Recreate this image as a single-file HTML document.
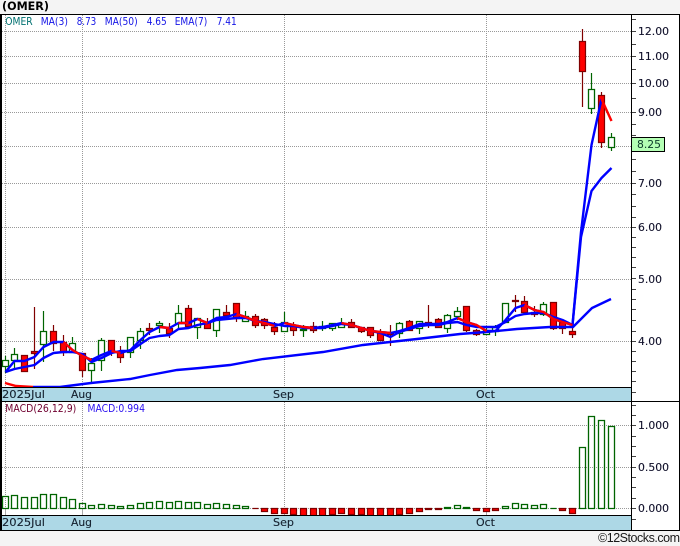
<!DOCTYPE html>
<html><head><meta charset="utf-8"><style>
html,body{margin:0;padding:0;background:#f4f4f4;width:680px;height:546px;overflow:hidden}
svg{display:block;position:absolute;left:0;top:0}
text{font-family:"DejaVu Sans","Liberation Sans",sans-serif}
</style></head><body>
<svg width="680" height="546" viewBox="0 0 680 546" xmlns="http://www.w3.org/2000/svg">
<rect x="0" y="0" width="680" height="546" fill="#f4f4f4"/>
<rect x="0" y="14" width="680" height="516" fill="#fff"/>
<text x="2" y="10" font-size="11.5" font-weight="bold" fill="#000" textLength="47" lengthAdjust="spacingAndGlyphs">(OMER)</text>

<!-- grid -->
<path d="M2 31.5H631M2 56.5H631M2 83.5H631M2 112.5H631M2 146.5H631M2 183.5H631M2 227.5H631M2 279.5H631M2 341.5H631M2 425.5H631M2 467.5H631M2 508.5H631M5.5 15V388M82.5 15V388M284.5 15V388M486.5 15V388M5.5 402V516M82.5 402V516M284.5 402V516M486.5 402V516" stroke="#999" stroke-width="1" stroke-dasharray="1 1" fill="none"/>
<path d="M5.5 509V516M82.5 509V516M284.5 509V516M486.5 509V516" stroke="#aaa" stroke-width="1" fill="none"/>

<!-- wicks -->
<path fill="none" stroke="#006400" stroke-width="1.2" d="M5.5 356V373M14.5 348V370M43.5 311V362M72.5 337V352M91.5 358V383M101.5 338V371M130.5 337V358M140.5 328V349M159.5 321V333M178.5 305V329M197.5 318V339M216.5 309V337M245.5 311V322M284.5 312V331M303.5 325V337M322.5 321V331M332.5 323V331M341.5 318V328M399.5 322V338M419.5 321V334M447.5 314V333M457.5 307V320M486.5 326V334M495.5 325V336M505.5 303V323M543.5 302V316M591.5 73V114M611.5 133V151"/>
<path fill="none" stroke="#800000" stroke-width="1.2" d="M24.5 355V371M34.5 307V369M53.5 325V351M63.5 335V356M82.5 353V377M111.5 340V356M120.5 346V363M149.5 323V335M169.5 323V338M188.5 305V327M207.5 318V329M226.5 305V318M236.5 303V322M255.5 314V328M264.5 318V329M274.5 322V335M293.5 322V336M313.5 322V333M351.5 319V328M361.5 327V333M370.5 327V338M380.5 329V340M390.5 325V346M409.5 320V330M428.5 305V328M438.5 318V328M466.5 306V332M476.5 329V336M515.5 295V312M524.5 296V314M534.5 306V317M553.5 302V330M562.5 322V334M572.5 327V338M582.5 29V107M601.5 92V148"/>
<!-- bodies -->
<path fill="#fff" stroke="#006400" stroke-width="1.3" d="M2.5 360.5h6v6h-6zM11.5 354.5h6v6h-6zM40.5 331.5h6v13h-6zM69.5 343.5h6v9h-6zM88.5 363.5h6v7h-6zM98.5 340.5h6v20h-6zM127.5 337.5h6v15h-6zM137.5 331.5h6v9h-6zM156.5 323.5h6v2h-6zM175.5 313.5h6v10h-6zM194.5 318.5h6v9h-6zM213.5 309.5h6v21h-6zM242.5 316.5h6v5h-6zM281.5 322.5h6v9h-6zM300.5 329.5h6v1h-6zM319.5 326.5h6v2h-6zM329.5 323.5h6v5h-6zM338.5 323.5h6v4h-6zM396.5 323.5h6v10h-6zM416.5 321.5h6v7h-6zM444.5 315.5h6v13h-6zM454.5 311.5h6v5h-6zM483.5 330.5h6v4h-6zM492.5 327.5h6v4h-6zM502.5 303.5h6v19h-6zM540.5 304.5h6v10h-6zM588.5 89.5h6v19h-6zM608.5 137.5h6v10h-6z"/>
<path fill="#f00" stroke="#800000" stroke-width="1.2" d="M21.5 355.5h6v16h-6zM31.5 351.5h6v2h-6zM50.5 331.5h6v12h-6zM60.5 342.5h6v10h-6zM79.5 353.5h6v17h-6zM108.5 340.5h6v12h-6zM117.5 351.5h6v6h-6zM146.5 328.5h6v2h-6zM166.5 328.5h6v5h-6zM185.5 308.5h6v18h-6zM204.5 322.5h6v6h-6zM223.5 312.5h6v3h-6zM233.5 303.5h6v15h-6zM252.5 316.5h6v9h-6zM261.5 319.5h6v6h-6zM271.5 327.5h6v4h-6zM290.5 325.5h6v5h-6zM310.5 326.5h6v4h-6zM348.5 322.5h6v5h-6zM358.5 327.5h6v4h-6zM367.5 327.5h6v8h-6zM377.5 332.5h6v8h-6zM387.5 333.5h6v1h-6zM406.5 321.5h6v9h-6zM425.5 322.5h6v2h-6zM435.5 319.5h6v8h-6zM463.5 306.5h6v24h-6zM473.5 330.5h6v4h-6zM512.5 300.5h6v1h-6zM521.5 301.5h6v11h-6zM531.5 312.5h6v2h-6zM550.5 302.5h6v26h-6zM559.5 322.5h6v6h-6zM569.5 331.5h6v3h-6zM579.5 41.5h6v30h-6zM598.5 95.5h6v47h-6z"/>

<!-- MA50 -->
<polyline fill="none" stroke="#0000ff" stroke-width="2.4" points="33,387 60,387 91,383 130,379 150,375 177,370 200,368 230,365 263,359 323,352 363,345 390,342 417,339 460,334 486,332 517,329 550,327 573,327 592,308 611,299"/>
<polyline fill="none" stroke="#f00" stroke-width="2.4" points="5,383 16,386 33,387"/>
<!-- EMA7 -->
<polyline fill="none" stroke="#0000ff" stroke-width="2.4" stroke-linejoin="round" points="5.5,372 14.5,369 24.5,367 34.5,365 43.5,358 53.5,353 63.5,352 72.5,352 82.5,354 91.5,362 101.5,358 111.5,353 120.5,351 130.5,351 140.5,344 149.5,338 159.5,336 169.5,335 178.5,329 188.5,328 197.5,325 207.5,323 216.5,320 226.5,319 236.5,318 245.5,318 255.5,321 264.5,322 274.5,324 284.5,326 293.5,326 303.5,328 313.5,328 322.5,328 332.5,326 341.5,324 351.5,325 361.5,328 370.5,331 380.5,333 390.5,337 399.5,332 409.5,329 419.5,326 428.5,325 438.5,325 447.5,323 457.5,322 466.5,325 476.5,327 486.5,327 495.5,327 505.5,322 515.5,316 524.5,314 534.5,313 543.5,313 553.5,317 562.5,320 572.5,325 581,237 591.5,191 601.5,178 611.5,168"/>
<!-- MA3 -->
<polyline fill="none" stroke="#0000ff" stroke-width="2.4" stroke-linejoin="round" points="5.5,372 14.5,361 24.5,361 34.5,357 43.5,347 53.5,342 63.5,342 72.5,350 82.5,356 91.5,360 101.5,355 111.5,351 120.5,353 130.5,350 140.5,340 149.5,332 159.5,327 169.5,328 178.5,323 188.5,323 197.5,319 207.5,323 216.5,318 226.5,317 236.5,314 245.5,317 255.5,321 264.5,323 274.5,326 284.5,323 293.5,325 303.5,327 313.5,328 322.5,327 332.5,325 341.5,323 351.5,325 361.5,328 370.5,331 380.5,332 390.5,333 399.5,331 409.5,328 419.5,324 428.5,324 438.5,324 447.5,322 457.5,318 466.5,322 476.5,325 486.5,331 495.5,331 505.5,320 515.5,308 524.5,305 534.5,310 543.5,312 553.5,319 562.5,322 572.5,325 581,232 591.5,145 601.5,99"/>
<g fill="none" stroke="#f00" stroke-width="2.4" stroke-linejoin="round">
<polyline points="63.5,342 72.5,350 82.5,356 91.5,360"/>
<polyline points="111.5,351 120.5,353"/>
<polyline points="159.5,327 169.5,328"/>
<polyline points="178.5,323 188.5,323"/>
<polyline points="197.5,319 207.5,323"/>
<polyline points="236.5,314 245.5,317 255.5,321 264.5,323 274.5,326"/>
<polyline points="284.5,323 293.5,325 303.5,327 313.5,328"/>
<polyline points="341.5,323 351.5,325 361.5,328 370.5,331 380.5,332 390.5,333"/>
<polyline points="457.5,318 466.5,322 476.5,325 486.5,331"/>
<polyline points="524.5,305 534.5,310 543.5,312 553.5,319 562.5,322 572.5,325"/>
<polyline points="601.5,99 611.5,121"/>
</g>

<!-- MACD histogram -->
<path fill="none" stroke="#006400" stroke-width="1.3" d="M2.5 496.5h6V508.5h-6zM11.5 495.5h6V508.5h-6zM21.5 497.5h6V508.5h-6zM31.5 497.5h6V508.5h-6zM40.5 494.5h6V508.5h-6zM50.5 494.5h6V508.5h-6zM60.5 497.5h6V508.5h-6zM69.5 499.5h6V508.5h-6zM79.5 503.5h6V508.5h-6zM88.5 505.5h6V508.5h-6zM98.5 504.5h6V508.5h-6zM108.5 505.5h6V508.5h-6zM117.5 506.5h6V508.5h-6zM127.5 505.5h6V508.5h-6zM137.5 503.5h6V508.5h-6zM146.5 502.5h6V508.5h-6zM156.5 501.5h6V508.5h-6zM166.5 502.5h6V508.5h-6zM175.5 501.5h6V508.5h-6zM185.5 502.5h6V508.5h-6zM194.5 502.5h6V508.5h-6zM204.5 504.5h6V508.5h-6zM213.5 503.5h6V508.5h-6zM223.5 504.5h6V508.5h-6zM233.5 505.5h6V508.5h-6zM242.5 506.5h6V508.5h-6zM444.5 507.5h6V508.5h-6zM454.5 505.5h6V508.5h-6zM463.5 507.5h6V508.5h-6zM502.5 506.5h6V508.5h-6zM512.5 503.5h6V508.5h-6zM521.5 504.5h6V508.5h-6zM531.5 505.5h6V508.5h-6zM540.5 504.5h6V508.5h-6zM550.5 508.5h6M579.5 447.5h6V508.5h-6zM588.5 416.5h6V508.5h-6zM598.5 420.5h6V508.5h-6zM608.5 426.5h6V508.5h-6z"/>
<path fill="#f00" stroke="#800000" stroke-width="1.2" d="M252.5 508.5h6M261.5 508.5h6v3h-6zM271.5 508.5h6v5h-6zM281.5 508.5h6v5h-6zM290.5 508.5h6v6h-6zM300.5 508.5h6v7h-6zM310.5 508.5h6v7h-6zM319.5 508.5h6v7h-6zM329.5 508.5h6v6h-6zM338.5 508.5h6v5h-6zM348.5 508.5h6v6h-6zM358.5 508.5h6v6h-6zM367.5 508.5h6v7h-6zM377.5 508.5h6v7h-6zM387.5 508.5h6v7h-6zM396.5 508.5h6v6h-6zM406.5 508.5h6v5h-6zM416.5 508.5h6v3h-6zM425.5 508.5h6v1h-6zM435.5 508.5h6v1h-6zM473.5 508.5h6v2h-6zM483.5 508.5h6v3h-6zM492.5 508.5h6v2h-6zM559.5 508.5h6v2h-6zM569.5 508.5h6v5h-6z"/>

<!-- bands -->
<rect x="1" y="388" width="630" height="13" fill="#add8e6"/>
<rect x="1" y="516" width="630" height="14" fill="#add8e6"/>
<g font-size="11" fill="#14202e" stroke="#14202e" stroke-width="0.12">
<text x="2" y="398" textLength="43" lengthAdjust="spacingAndGlyphs">2025Jul</text>
<text x="71" y="398" textLength="21" lengthAdjust="spacingAndGlyphs">Aug</text>
<text x="273" y="398" textLength="21" lengthAdjust="spacingAndGlyphs">Sep</text>
<text x="476" y="398" textLength="19" lengthAdjust="spacingAndGlyphs">Oct</text>
<text x="2" y="526" textLength="43" lengthAdjust="spacingAndGlyphs">2025Jul</text>
<text x="71" y="526" textLength="21" lengthAdjust="spacingAndGlyphs">Aug</text>
<text x="273" y="526" textLength="21" lengthAdjust="spacingAndGlyphs">Sep</text>
<text x="476" y="526" textLength="19" lengthAdjust="spacingAndGlyphs">Oct</text>
</g>

<!-- frame -->
<path fill="none" stroke="#000" stroke-width="1" d="M0 14.5H680M0 387.5H631M0 401.5H680M0 515.5H631M0 530.5H680M631.5 14V530M679.5 14V530"/>
<rect x="0" y="14" width="2" height="517" fill="#000"/>
<!-- ticks -->
<path fill="none" stroke="#444" stroke-width="1" d="M632 19.5h4M632 31.5h4M632 44.5h4M632 56.5h4M632 69.5h4M632 83.5h4M632 98.5h4M632 112.5h4M632 124.5h4M632 135.5h4M632 159.5h4M632 171.5h4M632 183.5h4M632 194.5h4M632 206.5h4M632 217.5h4M632 227.5h4M632 237.5h4M632 247.5h4M632 257.5h4M632 267.5h4M632 278.5h4M632 289.5h4M632 299.5h4M632 309.5h4M632 320.5h4M632 331.5h4M632 341.5h4M632 351.5h4M632 361.5h4M632 371.5h4M632 381.5h4M632 392.5h4M632 405.5h4M632 415.5h4M632 425.5h4M632 436.5h4M632 446.5h4M632 456.5h4M632 467.5h4M632 477.5h4M632 487.5h4M632 498.5h4M632 508.5h4M632 519.5h4"/>
<!-- axis labels -->
<g font-size="11" fill="#10102a" stroke="#10102a" stroke-width="0.12">
<text x="638" y="35" textLength="31" lengthAdjust="spacingAndGlyphs">12.00</text>
<text x="638" y="60" textLength="31" lengthAdjust="spacingAndGlyphs">11.00</text>
<text x="638" y="87" textLength="31" lengthAdjust="spacingAndGlyphs">10.00</text>
<text x="638" y="116" textLength="24" lengthAdjust="spacingAndGlyphs">9.00</text>
<text x="638" y="187" textLength="24" lengthAdjust="spacingAndGlyphs">7.00</text>
<text x="638" y="231" textLength="24" lengthAdjust="spacingAndGlyphs">6.00</text>
<text x="638" y="283" textLength="24" lengthAdjust="spacingAndGlyphs">5.00</text>
<text x="638" y="345" textLength="24" lengthAdjust="spacingAndGlyphs">4.00</text>
<text x="638" y="429" textLength="31" lengthAdjust="spacingAndGlyphs">1.000</text>
<text x="638" y="471" textLength="31" lengthAdjust="spacingAndGlyphs">0.500</text>
<text x="638" y="512" textLength="31" lengthAdjust="spacingAndGlyphs">0.000</text>
</g>
<rect x="631.5" y="137.5" width="33" height="14" fill="#b4ffb4" stroke="#000"/>
<text x="637" y="148" font-size="11" fill="#0c3a2a" textLength="24" lengthAdjust="spacingAndGlyphs">8.25</text>

<!-- legends -->
<g font-size="10.4">
<text x="5.3" y="25" fill="#007070" textLength="27.4" lengthAdjust="spacingAndGlyphs">OMER</text>
<g fill="#1414e6">
<text x="40.7" y="25" textLength="27.3" lengthAdjust="spacingAndGlyphs">MA(3)</text>
<text x="76.7" y="25" textLength="19.6" lengthAdjust="spacingAndGlyphs">8.73</text>
<text x="104.7" y="25" textLength="33" lengthAdjust="spacingAndGlyphs">MA(50)</text>
<text x="146.7" y="25" textLength="20" lengthAdjust="spacingAndGlyphs">4.65</text>
<text x="174.7" y="25" textLength="32.6" lengthAdjust="spacingAndGlyphs">EMA(7)</text>
<text x="216.7" y="25" textLength="20" lengthAdjust="spacingAndGlyphs">7.41</text>
</g>
<text x="5.3" y="412" fill="#700030" textLength="71" lengthAdjust="spacingAndGlyphs">MACD(26,12,9)</text>
<text x="87.5" y="412" fill="#2a10f0" textLength="57.5" lengthAdjust="spacingAndGlyphs">MACD:0.994</text>
</g>
<text x="598" y="542" font-size="12.5" fill="#1a1a1a" style="font-family:'Liberation Sans',sans-serif" textLength="82" lengthAdjust="spacing">©12Stocks.com</text>
</svg>
</body></html>
